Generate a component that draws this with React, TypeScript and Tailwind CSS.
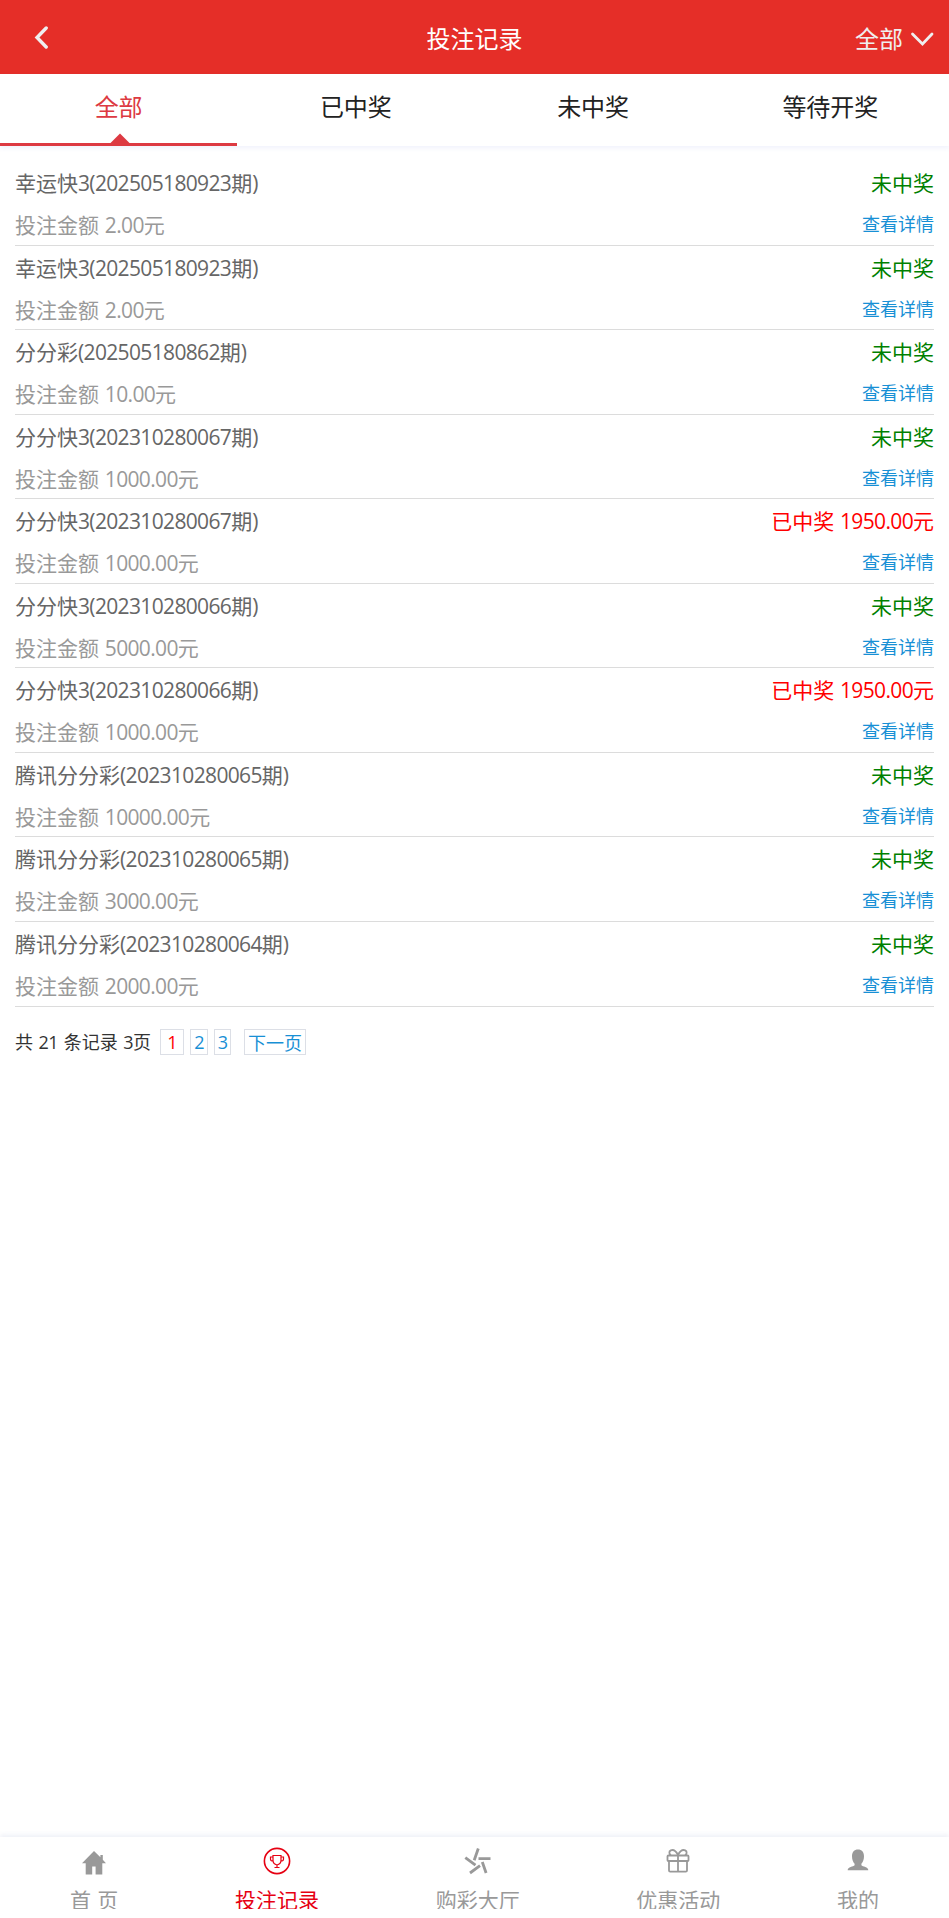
import { Fragment, type ReactNode } from "react";

type Bet = {
  id: number;
  game: string;
  issue: string;
  amount: string;
  prize?: string;
};

const bets: Bet[] = [
  { id: 1, game: "幸运快3", issue: "202505180923", amount: "2.00" },
  { id: 2, game: "幸运快3", issue: "202505180923", amount: "2.00" },
  { id: 3, game: "分分彩", issue: "202505180862", amount: "10.00" },
  { id: 4, game: "分分快3", issue: "202310280067", amount: "1000.00" },
  { id: 5, game: "分分快3", issue: "202310280067", amount: "1000.00", prize: "1950.00" },
  { id: 6, game: "分分快3", issue: "202310280066", amount: "5000.00" },
  { id: 7, game: "分分快3", issue: "202310280066", amount: "1000.00", prize: "1950.00" },
  { id: 8, game: "腾讯分分彩", issue: "202310280065", amount: "10000.00" },
  { id: 9, game: "腾讯分分彩", issue: "202310280065", amount: "3000.00" },
  { id: 10, game: "腾讯分分彩", issue: "202310280064", amount: "2000.00" },
];

const tabs = ["全部", "已中奖", "未中奖", "等待开奖"];

export default function App() {
  return (
    <div className="flex h-[1918px] w-full flex-col bg-white font-['Noto_Sans_CJK_SC',sans-serif] text-[#222]">
      <Header />
      <Tabs />
      <main className="flex-1 px-[15px] pt-[15.05px]">
        {bets.map((bet) => (
          <BetRow key={bet.id} bet={bet} />
        ))}
        <Pager />
      </main>
      <BottomNav />
    </div>
  );
}

// Latin runs are set in Open Sans, slightly tightened next to the Chinese glyphs.
function Mixed({ text }: { text: string }) {
  return (
    <>
      {text.split(/([\x20-\x7e]+)/).map((part, i) =>
        i % 2 === 1 ? (
          <span key={i} className="font-['Open_Sans',sans-serif] tracking-[-0.031em] whitespace-pre">{part}</span>
        ) : (
          <Fragment key={i}>{part}</Fragment>
        )
      )}
    </>
  );
}

function Header() {
  return (
    <header className="grid h-[74px] shrink-0 grid-cols-3 items-center bg-[#e52e28] text-2xl text-white">
      <button type="button" className="pl-[33px]">
        <svg width="16" height="24" viewBox="0 0 16 24" fill="none" stroke="#efefef" strokeWidth="3.4" strokeLinecap="round">
          <path d="M13.2 3 4 12.500 13.200 22" />
        </svg>
      </button>
      <h1 className="pt-px text-center leading-none">投注记录</h1>
      <div className="flex items-center justify-end gap-[7px] pt-px pr-[15px] leading-none text-[#efefef]">
        全部
        <svg className="mt-0.5" width="24" height="16" viewBox="0 0 24 16" fill="none" stroke="currentColor" strokeWidth="2.8" strokeLinecap="round">
          <path d="M2.5 3 12.5 13 22 3" />
        </svg>
      </div>
    </header>
  );
}

function Tabs() {
  return (
    <nav className="grid h-[72px] shrink-0 grid-cols-4 text-2xl shadow-[0_2px_5px_rgba(60,80,220,0.08)]">
      {tabs.map((tab, i) => (
        <div
          key={tab}
          className={
            i === 0
              ? "relative border-b-[3px] border-[#dd3a42] pt-5 text-center leading-none text-[#dd3a42]"
              : "pt-5 text-center leading-none"
          }
        >
          {tab}
          {i === 0 ? (
            <svg className="absolute bottom-0 left-[110px]" width="20" height="10" viewBox="0 0 20 10" fill="#dd3a42">
              <path d="M0.5 10 10 0.5 19.5 10Z" />
            </svg>
          ) : null}
        </div>
      ))}
    </nav>
  );
}

function BetRow({ bet }: { bet: Bet }) {
  return (
    <article className="h-[84.55px] border-b border-[#dcdcdc] text-[21px] [word-spacing:1px]">
      <div className="flex h-[43px] items-center justify-between leading-[43px]">
        <h3 className="pt-px text-[#666]">
          <Mixed text={`${bet.game}(${bet.issue}期)`} />
        </h3>
        {bet.prize ? (
          <span className="text-[#f00]">
            <Mixed text={`已中奖 ${bet.prize}元`} />
          </span>
        ) : (
          <span className="text-[#008000]">未中奖</span>
        )}
      </div>
      <div className="flex h-[40px] justify-between leading-[40px]">
        <p className="text-[#999]">
          <Mixed text={`投注金额 ${bet.amount}元`} />
        </p>
        <a className="text-lg leading-[38px] text-[#1890d5]">查看详情</a>
      </div>
    </article>
  );
}

function Pager() {
  return (
    <div className="mt-[22px] flex h-[26px] items-center text-lg leading-6 text-[#333]">
      <span className="w-[145px] [word-spacing:1.5px]">
        <Mixed text="共 21 条记录 3页" />
      </span>
      <span className="flex h-full w-6 items-center justify-center border border-[#dcdfe6] text-[#f00]">
        <Mixed text="1" />
      </span>
      <a className="ml-1.5 flex h-full w-[18px] items-center justify-center border border-[#dcdfe6] text-[#1890d5]">
        <Mixed text="2" />
      </a>
      <a className="ml-1.5 flex h-full w-[17px] items-center justify-center border border-[#dcdfe6] text-[#1890d5]">
        <Mixed text="3" />
      </a>
      <a className="ml-[13px] flex h-full w-[62px] items-center justify-center border border-[#dcdfe6] text-[#1890d5]">下一页</a>
    </div>
  );
}

function BottomNav() {
  return (
    <footer className="flex h-[81px] shrink-0 justify-between px-[70px] text-[21px] text-[#999] shadow-[0_-2px_5px_rgba(60,80,160,0.09)]">
      <NavItem label="首 页">
        <svg width="26" height="28" viewBox="0 0 26 28" fill="currentColor">
          <path d="M13 4 1 16.2h3.700v11.300h6.500v-8h3.400v8h6.700V16.200H25L21.800 12.800V8h-2.400v2.300Z" />
        </svg>
      </NavItem>
      <NavItem label="投注记录" active>
        <svg width="28" height="28" viewBox="0 0 28 28" fill="none" stroke="currentColor" strokeWidth="1.6">
          <circle cx="14" cy="14" r="12.6" />
          <path d="M10 8.5h8v4.7c0 2.5-1.8 4.2-4 4.8-2.2-.6-4-2.3-4-4.8ZM10 10H7.5v2.2c0 1 1 1.8 2.7 1.8M18 10h2.500v2.200c0 1-1 1.800-2.700 1.800M14 18v2M11.500 20.500h5" strokeWidth="1.2" />
        </svg>
      </NavItem>
      <NavItem label="购彩大厅">
        <svg width="28" height="28" viewBox="0 0 28 28" fill="none" stroke="currentColor" strokeWidth="2.8">
          <path d="M14.3 1.500 10.200 13.200M14.500 11.700h12M18.300 15l3.800 11M16 18.700 6 26M11.500 18.200 1.300 10.600" />
        </svg>
      </NavItem>
      <NavItem label="优惠活动">
        <svg width="26" height="28" viewBox="0 0 26 28" fill="none" stroke="currentColor" strokeWidth="1.8">
          <rect x="2.500" y="8.500" width="21" height="5.500" rx="0.8" />
          <path d="M4 14v9.500a1.200 1.200 0 0 0 1.200 1.200h15.600a1.200 1.200 0 0 0 1.200-1.200V14M13 8v16.500M13 8C11 4 8 2.500 5.800 3.300 3.500 4.300 4.200 7.500 6 8.200M13 8c2-4 5-5.500 7.200-4.700C22.500 4.300 21.800 7.500 20 8.200" />
        </svg>
      </NavItem>
      <NavItem label="我的">
        <svg width="22" height="28" viewBox="0 0 22 28" fill="currentColor">
          <path d="M11 2.600c3.800 0 6 2.600 6 6.600 0 3.300-1.200 6.200-2.600 7.600v1.400c1.200 1.500 6.900 1.300 6.900 5.100H.7c0-3.800 5.700-3.600 6.900-5.100v-1.400C6.200 15.400 5 12.500 5 9.200c0-4 2.200-6.600 6-6.600Z" />
        </svg>
      </NavItem>
    </footer>
  );
}

function NavItem({ label, active, children }: { label: string; active?: boolean; children: ReactNode }) {
  return (
    <div className={active ? "flex flex-col items-center pt-[10px] text-[#e60012]" : "flex flex-col items-center pt-[10px]"}>
      {children}
      {/* the label box is shorter than its glyphs, so it trims them */}
      <span className="mt-[13px] h-[21px] overflow-hidden leading-[23px] [word-spacing:1.5px]">
        <Mixed text={label} />
      </span>
    </div>
  );
}
